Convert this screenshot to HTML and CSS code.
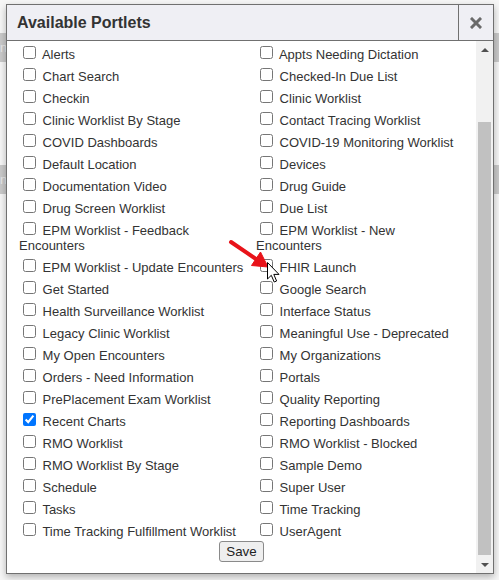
FILE: index.html
```html
<!DOCTYPE html>
<html>
<head>
<meta charset="utf-8">
<link rel="stylesheet" href="styles.css">
</head>
<body>
<div class="backdrop">
  <div class="strip s1">ni</div>
  <div class="strip s2">ni</div>
</div>
<div class="dialog">
  <div class="header">
    <h1 class="title">Available Portlets</h1>
    <button class="close" aria-label="Close">
      <svg width="12" height="12" viewBox="0 0 12 12"><path d="M2 2 L10 10 M10 2 L2 10" stroke="#6a6a6a" stroke-width="3" stroke-linecap="square"/></svg>
    </button>
  </div>
  <div class="body">
    <div class="list">
      <div class="grid">
        <label class="item"><input type="checkbox"> Alerts</label>
        <label class="item"><input type="checkbox"> Appts Needing Dictation</label>
        <label class="item"><input type="checkbox"> Chart Search</label>
        <label class="item"><input type="checkbox"> Checked-In Due List</label>
        <label class="item"><input type="checkbox"> Checkin</label>
        <label class="item"><input type="checkbox"> Clinic Worklist</label>
        <label class="item"><input type="checkbox"> Clinic Worklist By Stage</label>
        <label class="item"><input type="checkbox"> Contact Tracing Worklist</label>
        <label class="item"><input type="checkbox"> COVID Dashboards</label>
        <label class="item"><input type="checkbox"> COVID-19 Monitoring Worklist</label>
        <label class="item"><input type="checkbox"> Default Location</label>
        <label class="item"><input type="checkbox"> Devices</label>
        <label class="item"><input type="checkbox"> Documentation Video</label>
        <label class="item"><input type="checkbox"> Drug Guide</label>
        <label class="item"><input type="checkbox"> Drug Screen Worklist</label>
        <label class="item"><input type="checkbox"> Due List</label>
        <label class="item"><input type="checkbox"> EPM Worklist - Feedback Encounters</label>
        <label class="item"><input type="checkbox"> EPM Worklist - New Encounters</label>
        <label class="item"><input type="checkbox"> EPM Worklist - Update Encounters</label>
        <label class="item"><input type="checkbox"> FHIR Launch</label>
        <label class="item"><input type="checkbox"> Get Started</label>
        <label class="item"><input type="checkbox"> Google Search</label>
        <label class="item"><input type="checkbox"> Health Surveillance Worklist</label>
        <label class="item"><input type="checkbox"> Interface Status</label>
        <label class="item"><input type="checkbox"> Legacy Clinic Worklist</label>
        <label class="item"><input type="checkbox"> Meaningful Use - Deprecated</label>
        <label class="item"><input type="checkbox"> My Open Encounters</label>
        <label class="item"><input type="checkbox"> My Organizations</label>
        <label class="item"><input type="checkbox"> Orders - Need Information</label>
        <label class="item"><input type="checkbox"> Portals</label>
        <label class="item"><input type="checkbox"> PrePlacement Exam Worklist</label>
        <label class="item"><input type="checkbox"> Quality Reporting</label>
        <label class="item"><input type="checkbox" checked> Recent Charts</label>
        <label class="item"><input type="checkbox"> Reporting Dashboards</label>
        <label class="item"><input type="checkbox"> RMO Worklist</label>
        <label class="item"><input type="checkbox"> RMO Worklist - Blocked</label>
        <label class="item"><input type="checkbox"> RMO Worklist By Stage</label>
        <label class="item"><input type="checkbox"> Sample Demo</label>
        <label class="item"><input type="checkbox"> Schedule</label>
        <label class="item"><input type="checkbox"> Super User</label>
        <label class="item"><input type="checkbox"> Tasks</label>
        <label class="item"><input type="checkbox"> Time Tracking</label>
        <label class="item"><input type="checkbox"> Time Tracking Fulfillment Worklist</label>
        <label class="item"><input type="checkbox"> UserAgent</label>
      </div>
      <div class="actions"><button class="save">Save</button></div>
    </div>
    <div class="scrollbar">
      <div class="sb-btn"><span class="tri up"></span></div>
      <div class="sb-track"><div class="sb-thumb"></div></div>
      <div class="sb-btn"><span class="tri down"></span></div>
    </div>
  </div>
</div>
<svg class="annot" width="499" height="580" viewBox="0 0 499 580">
  <path d="M231 242 L256 259" stroke="#e8131a" stroke-width="4" stroke-linecap="round"/>
  <path d="M268 267 L251.5 265.5 L260.5 252 Z" fill="#e8131a" stroke="#e8131a" stroke-width="1" stroke-linejoin="round"/>
  <path d="M267.5 262.5 L267.5 279 L271.3 275.3 L274.2 282 L276.6 281 L273.8 274.4 L279 274.4 Z" fill="#fff" stroke="#000" stroke-width="1" stroke-linejoin="round"/>
</svg>
</body>
</html>
```
FILE: styles.css
```css
html, body {
  margin: 0;
  padding: 0;
}
body {
  width: 499px;
  height: 580px;
  background: #f6f6f6;
  font-family: "Liberation Sans", Arial, sans-serif;
  overflow: hidden;
  position: relative;
}
.backdrop {
  padding-top: 33px;
}
.strip {
  height: 29px;
  background: #c9c9c9;
  color: #e8e8e8;
  font-size: 13px;
  line-height: 29px;
  padding-left: 0;
}
.s2 {
  margin-top: 103px;
}
.dialog {
  position: absolute;
  left: 6px;
  top: 4px;
  width: 488px;
  height: 570px;
  box-sizing: border-box;
  border: 1px solid #707070;
  background: #fff;
  box-shadow: 0 3px 7px rgba(0, 0, 0, 0.28);
  display: flex;
  flex-direction: column;
}
.header {
  height: 36px;
  box-sizing: border-box;
  border-bottom: 1px solid #707070;
  background: #efeff4;
  display: flex;
  align-items: center;
}
.title {
  flex: 1;
  margin: 0;
  padding-left: 10px;
  font-size: 16px;
  font-weight: bold;
  color: #333;
}
.close {
  width: 35px;
  height: 35px;
  border: 0;
  border-left: 1px solid #707070;
  background: #efeff4;
  padding: 0;
  display: flex;
  align-items: center;
  justify-content: center;
}
.body {
  flex: 1;
  display: flex;
  min-height: 0;
}
.list {
  flex: 1;
  overflow: hidden;
  padding-top: 2px;
}
.grid {
  display: grid;
  grid-template-columns: 237px 200px;
  padding-left: 12px;
}
.item {
  display: block;
  padding: 3px 0;
  font-size: 13px;
  line-height: 15px;
  color: #333;
}
.item input {
  margin: 0 3px 0 4px;
  width: 13px;
  height: 13px;
  vertical-align: baseline;
}
.actions {
  text-align: center;
  margin-top: -1px;
}
.save {
  font-family: "Liberation Sans", Arial, sans-serif;
  font-size: 13.33px;
  color: #222;
  background: #efefef;
  border: 1px solid #8a8a8a;
  border-radius: 3px;
  padding: 1px 6px;
  height: 21px;
}
.scrollbar {
  width: 17px;
  background: #f1f1f1;
  display: flex;
  flex-direction: column;
}
.sb-btn {
  height: 17px;
  display: flex;
  align-items: center;
  justify-content: center;
}
.tri {
  width: 0;
  height: 0;
  border-left: 4px solid transparent;
  border-right: 4px solid transparent;
}
.tri.up {
  border-bottom: 4px solid #505050;
}
.tri.down {
  border-top: 4px solid #505050;
}
.sb-track {
  flex: 1;
  padding-top: 64px;
  padding-bottom: 1px;
  display: flex;
  flex-direction: column;
}
.sb-thumb {
  flex: 1;
  margin: 0 2px;
  background: #c1c1c1;
}
.annot {
  position: absolute;
  left: 0;
  top: 0;
  pointer-events: none;
}
```
